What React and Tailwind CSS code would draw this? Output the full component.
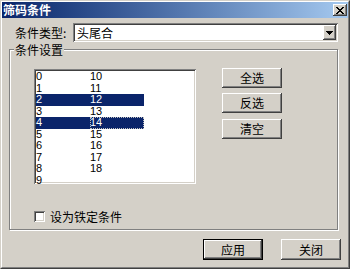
import React from "react";

const raised =
  "shadow-[inset_-1px_-1px_0_#404040,inset_1px_1px_0_#ffffff,inset_-2px_-2px_0_#808080,inset_2px_2px_0_#d4d0c8]";
const sunken =
  "shadow-[inset_1px_1px_0_#808080,inset_-1px_-1px_0_#ffffff,inset_2px_2px_0_#404040,inset_-2px_-2px_0_#d4d0c8]";

function Btn({ children, def }) {
  if (def) {
    return (
      <button className="w-[60px] h-[21px] border border-black bg-[#d4d0c8] p-0 flex items-center justify-center">
        <span className={`w-full h-full flex items-center justify-center leading-[12px] ${raised}`}>{children}</span>
      </button>
    );
  }
  return (
    <button className={`w-[60px] h-[21px] bg-[#d4d0c8] flex items-center justify-center leading-[12px] ${raised}`}>
      {children}
    </button>
  );
}

function SideBtn({ children }) {
  return (
    <button className={`w-[60px] h-[20px] bg-[#d4d0c8] flex items-center justify-center leading-[12px] ${raised}`}>
      {children}
    </button>
  );
}

export default function App() {
  const items = Array.from({ length: 19 }, (_, i) => i);
  const selected = [2, 4, 12, 14];
  return (
    <div className="w-[350px] h-[269px] bg-[#d4d0c8] border border-t-[#d4d0c8] border-l-[#d4d0c8] border-r-[#404040] border-b-[#404040] text-[12px] text-black font-['Noto_Sans_CJK_SC',sans-serif] overflow-hidden">
      <div className="h-full flex flex-col border border-t-white border-l-white border-r-[#808080] border-b-[#808080]">
        {/* title bar */}
        <div className="h-[16px] flex items-center justify-between bg-linear-to-r from-[#0a246a] to-[#a6caf0] pl-[1px] pr-[1px]">
          <span className="text-white font-bold text-[12px] leading-[14px]">筛码条件</span>
          <button className={`w-[14px] h-[12px] bg-[#d4d0c8] flex items-center justify-center ${raised}`}>
            <svg width="8" height="7" viewBox="0 0 8 7" shapeRendering="crispEdges">
              <path d="M0 0h2v1H0zM6 0h2v1H6zM1 1h2v1H1zM5 1h2v1H5zM2 2h4v1H2zM3 3h2v1H3zM2 4h4v1H2zM1 5h2v1H1zM5 5h2v1H5zM0 6h2v1H0zM6 6h2v1H6z" fill="#000" />
            </svg>
          </button>
        </div>

        {/* combo row */}
        <div className="mt-[5px] ml-[13px] flex items-center h-[19px]">
          <span className="w-[58px] leading-[14px]">条件类型:</span>
          <div className={`w-[265px] h-[19px] bg-white flex items-center pl-[4px] pr-[2px] ${sunken}`}>
            <span className="leading-[14px]">头尾合</span>
            <div className={`ml-auto w-[13px] h-[15px] bg-[#d4d0c8] flex items-center justify-center ${raised}`}>
              <svg width="7" height="4" viewBox="0 0 7 4" shapeRendering="crispEdges">
                <path d="M0 0h7v1H0zM1 1h5v1H1zM2 2h3v1H2zM3 3h1v1H3z" fill="#000" />
              </svg>
            </div>
          </div>
        </div>

        {/* group box */}
        <fieldset className="mt-[1px] ml-[7px] w-[329px] h-[187px] border border-[#808080] shadow-[inset_1px_1px_0_#ffffff,1px_1px_0_#ffffff] p-0">
          <legend className="ml-[4px] px-[1px] leading-[13px] bg-[#d4d0c8]">条件设置</legend>
          <div className="pl-[24px] pt-[13px]">
            <div className="flex items-start">
              <div className={`w-[162px] h-[115px] bg-white p-[2px] ${sunken}`}>
                <div className="grid grid-flow-col grid-rows-[repeat(10,11.5px)] grid-cols-[54px_54px] font-['Liberation_Sans',sans-serif] text-[11px]">
                  {items.map((n) => {
                    const sel = selected.includes(n);
                    return (
                      <div
                        key={n}
                        className={`leading-[11.5px] ${sel ? "bg-[#0a246a] text-white" : ""} ${n === 14 ? "outline-1 outline-dotted outline-[#c0c0c0] -outline-offset-1" : ""}`}
                      >
                        {n}
                      </div>
                    );
                  })}
                </div>
              </div>
              <div className="ml-[26px] -mt-[1px] flex flex-col">
                <SideBtn>全选</SideBtn>
                <div className="mt-[5px]"><SideBtn>反选</SideBtn></div>
                <div className="mt-[6px]"><SideBtn>清空</SideBtn></div>
              </div>
            </div>
            <div className="mt-[26px] flex items-center h-[13px]">
              <span className={`w-[11px] h-[11px] bg-white ${sunken}`}></span>
              <span className="ml-[5px] leading-[13px]">设为铁定条件</span>
            </div>
          </div>
        </fieldset>

        {/* bottom buttons */}
        <div className="mt-[9px] flex justify-end gap-[18px] pr-[7px]">
          <Btn def>应用</Btn>
          <Btn>关闭</Btn>
        </div>
      </div>
    </div>
  );
}
